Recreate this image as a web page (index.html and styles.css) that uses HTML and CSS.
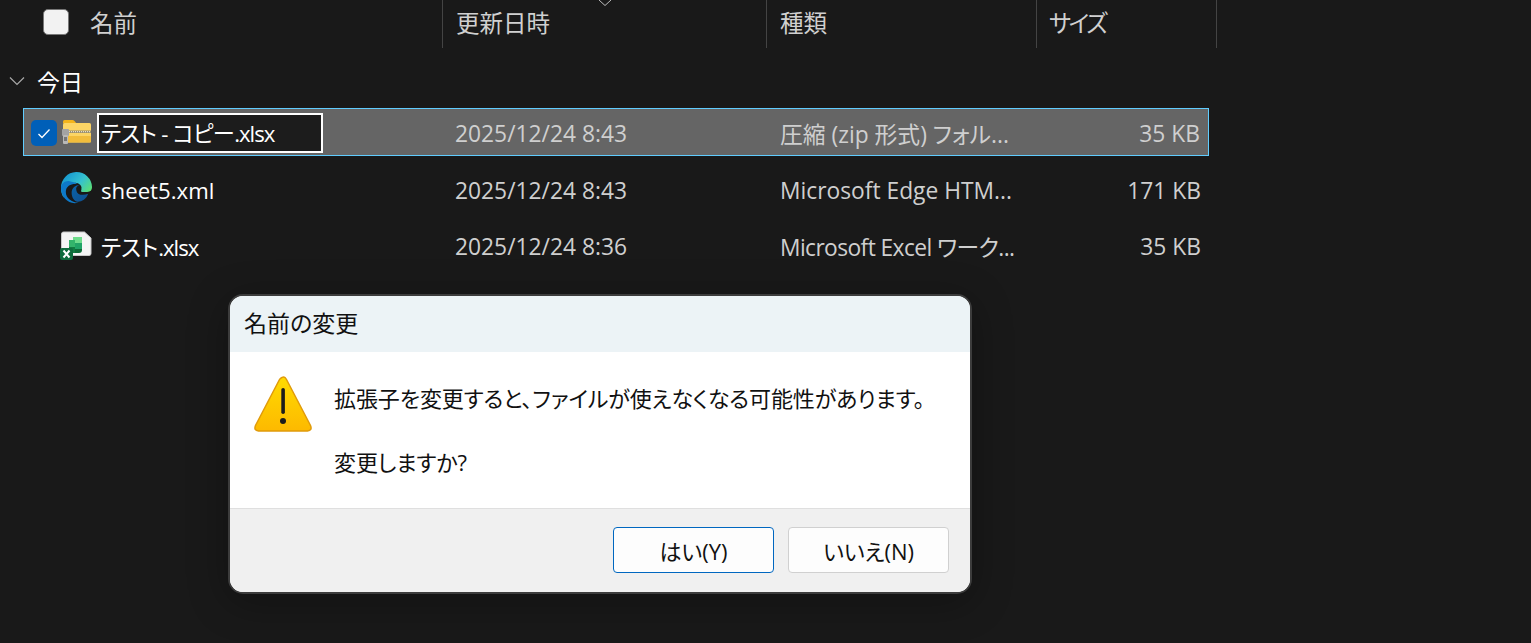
FILE: index.html
```html
<!DOCTYPE html>
<html lang="ja">
<head>
    <meta charset="utf-8">
    <title>名前の変更</title>
    <link rel="stylesheet" href="styles.css">
</head>
<body>
    <main class="explorer">
        <div class="list-header">
            <div class="col col-name">
                <span class="header-check"></span>
                <span>名前</span>
            </div>
            <div class="col col-date">更新日時
                <svg class="sort-arrow" width="14" height="7" viewBox="0 0 14 7"><path d="M1 0l6 5.500 6-5.500" fill="none" stroke="#bdbdbd" stroke-width="1"/></svg>
            </div>
            <div class="col col-type">種類</div>
            <div class="col col-size">サイズ</div>
        </div>

        <div class="group-title">
            <svg width="18" height="10" viewBox="0 0 18 10"><path d="M2 1.500l7 7 7-7" fill="none" stroke="#a8a8a8" stroke-width="1.200"/></svg>
            <span>今日</span>
        </div>

        <div class="file-row selected">
            <div class="cell-name">
                <span class="row-check">
                    <svg width="14" height="11" viewBox="0 0 14 11"><path d="M1.500 6l3.500 3.500 7.500-8" fill="none" stroke="#fff" stroke-width="1.300"/></svg>
                </span>
                <svg class="file-icon" width="31" height="30" viewBox="0 0 31 30">
                    <path d="M2 3.500q0-1.500 1.500-1.500h8q1 0 2 1l2 2.500h-13.500z" fill="#f3b41b"/>
                    <path d="M2 6.500q0-1.500 1.500-1.500h25q1.500 0 1.500 1.500v16.500q0 1.500-1.500 1.500h-25q-1.500 0-1.500-1.500z" fill="#fcd565"/>
                    <rect x="2" y="18" width="28" height="6.500" rx="1" fill="#f2bd3c"/>
                    <rect x="7" y="12.500" width="23" height="2.500" fill="#9c9170"/>
                    <path d="M8 13.700h22" stroke="#f5f0de" stroke-width="1" stroke-dasharray="1 1"/>
                    <rect x="1" y="11" width="7" height="7" rx="1" fill="#a3a3a3"/>
                    <rect x="2" y="17" width="5" height="9" rx="1" fill="#b8b8b8"/>
                    <rect x="3" y="19" width="3" height="4" fill="#777"/>
                </svg>
                <span class="rename-box">テスト - コピー<span class="ext">.xlsx</span></span>
            </div>
            <div class="cell-date">2025/12/24 8:43</div>
            <div class="cell-type">圧縮 (zip 形式) フォル...</div>
            <div class="cell-size">35 KB</div>
        </div>

        <div class="file-row">
            <div class="cell-name">
                <svg class="file-icon edge-icon" width="33" height="34" viewBox="0 0 34 34">
                    <defs>
                        <linearGradient id="edge-top" x1="0" y1="0" x2="1" y2="0.700">
                            <stop offset="0" stop-color="#0c8bd0"/>
                            <stop offset="0.600" stop-color="#35c1d0"/>
                            <stop offset="1" stop-color="#5ee26f"/>
                        </linearGradient>
                        <linearGradient id="edge-low" x1="0" y1="0" x2="1" y2="1">
                            <stop offset="0" stop-color="#0a62a8"/>
                            <stop offset="1" stop-color="#0f4f8e"/>
                        </linearGradient>
                    </defs>
                    <path d="M1 17a16 16 0 0 1 32-1q0 5-5 5h-5q-2 0-1-2 1-3-1-5-4-4-10-1-6 2-7 8-1 3 0 6-3-4-3-10z" fill="url(#edge-top)"/>
                    <path d="M1 17c0-5 5-8 9-7 5 1 8 3 8 3-5-1-12 1-12 8 0 6 6 11 13 11-9 3-18-5-18-15z" fill="#0d79c9"/>
                    <path d="M12 22c0-5 4-8 8-8-3 1-4 3-3 6 1 4 6 5 12 3-2 6-8 9-12 8-3-1-5-5-5-9z" fill="url(#edge-low)"/>
                </svg>
                <span class="file-name">sheet5.xml</span>
            </div>
            <div class="cell-date">2025/12/24 8:43</div>
            <div class="cell-type">Microsoft Edge HTM...</div>
            <div class="cell-size">171 KB</div>
        </div>

        <div class="file-row">
            <div class="cell-name">
                <svg class="file-icon" width="33" height="30" viewBox="0 0 33 30">
                    <path d="M1.500 3q0-2 2-2h21l6.500 6v15.500q0 2-2 2h-25.500q-2 0-2-2z" fill="#f5f5f5" stroke="#c8c8c8"/>
                    <path d="M13 6h9v6h-9z" fill="#6fdc8c"/>
                    <path d="M9 9h6v7h-6z" fill="#33b46b"/>
                    <path d="M15 12h7v6h-7z" fill="#21a366"/>
                    <path d="M9 16h6v6h-6z" fill="#107c41"/>
                    <path d="M15 18h7v1q0 3-3 3h-4z" fill="#0e6b38"/>
                    <rect x="0" y="17" width="13" height="12" rx="2" fill="#0e6b3c"/>
                    <path d="M3.500 19.500l6 7M9.500 19.500l-6 7" stroke="#fff" stroke-width="2"/>
                </svg>
                <span class="file-name">テスト<span class="ext">.xlsx</span></span>
            </div>
            <div class="cell-date">2025/12/24 8:36</div>
            <div class="cell-type tight">Microsoft Excel ワーク...</div>
            <div class="cell-size">35 KB</div>
        </div>
    </main>

    <!-- Rename warning -->
    <div class="dialog">
        <div class="dialog-title">名前の変更</div>
        <div class="dialog-body">
            <svg class="warn-icon" width="60" height="60" viewBox="0 0 60 60">
                <defs>
                    <linearGradient id="warn-fill" x1="0" y1="0" x2="0" y2="1">
                        <stop offset="0" stop-color="#ffdb00"/>
                        <stop offset="1" stop-color="#fdb900"/>
                    </linearGradient>
                </defs>
                <path d="M29 3.500q1.500-1.200 3 0 .7.600 1.500 2l24 46q2 5-3 5.500h-49q-5-.5-3-5.500l24-46q.8-1.400 2.500-2z" fill="url(#warn-fill)" stroke="#e09b0b" stroke-width="1.500"/>
                <rect x="28.300" y="14" width="3.600" height="26" rx="1.800" fill="#1c1c1c"/>
                <circle cx="30" cy="47" r="3" fill="#1c1c1c"/>
            </svg>
            <div class="dialog-text">
                <p>拡張子を変更すると、ファイルが使えなくなる可能性があります。</p>
                <p>変更しますか?</p>
            </div>
        </div>
        <div class="dialog-footer">
            <button class="button default">はい(Y)</button>
            <button class="button">いいえ(N)</button>
        </div>
    </div>
</body>
</html>
```

FILE: styles.css
```css
* {
    box-sizing: border-box;
}

html,
body {
    height: 100%;
}

body {
    margin: 0;
    background-color: #191919;
    color: #fff;
    font-family: "Open Sans", "Noto Sans CJK JP", sans-serif;
    font-size: 22px;
    font-feature-settings: "palt";
    overflow: hidden;
}

.list-header {
    display: flex;
    width: 1217px;
    height: 48px;
    color: #d0d0d0;
    font-size: 23.5px;
}

.col {
    position: relative;
    display: flex;
    align-items: center;
    height: 48px;
    border-right: 1px solid #444;
    padding-left: 13px;
    padding-bottom: 4px;
}

.col-name {
    width: 443px;
    padding-left: 43px;
    gap: 21px;
}

.col-date {
    width: 324px;
}

.col-type {
    width: 270px;
}

.col-size {
    width: 180px;
    padding-left: 12px;
    letter-spacing: -2.5px;
}

.header-check {
    width: 26px;
    height: 26px;
    border-radius: 5px;
    background-color: #f2f2f2;
    border: 1px solid #777;
}

.sort-arrow {
    position: absolute;
    top: 0;
    left: 155px;
}

.group-title {
    display: flex;
    align-items: center;
    gap: 11px;
    height: 60px;
    padding-left: 8px;
    padding-top: 5px;
    font-size: 23px;
}

.file-row {
    display: flex;
    align-items: center;
    width: 1186px;
    height: 48px;
    margin-left: 23px;
    margin-bottom: 8px;
    color: #cfcfcf;
    font-size: 22.8px;
}

.file-row.selected {
    background-color: #656565;
    border: 1px solid #60cdff;
    padding-top: 2px;
    margin-bottom: 10px;
}

.cell-name {
    display: flex;
    align-items: center;
    width: 432px;
    padding-left: 37px;
    color: #fff;
    font-size: 22.2px;
}

.selected .cell-name {
    width: 431px;
    padding-left: 7px;
}

.row-check {
    display: flex;
    align-items: center;
    justify-content: center;
    flex: none;
    width: 26px;
    height: 26px;
    border-radius: 5px;
    background-color: #005fb8;
    margin-right: 4px;
}

.file-icon {
    flex: none;
    margin-right: 8px;
}

.selected .file-icon {
    margin-right: 5px;
}

.edge-icon {
    margin-bottom: 4px;
}

.rename-box {
    width: 226px;
    height: 40px;
    line-height: 38px;
    padding-left: 2px;
    background-color: #1c1c1c;
    border: 2px solid #fff;
    white-space: nowrap;
    letter-spacing: -0.7px;
}

.ext {
    letter-spacing: -1px;
}

.cell-date {
    width: 325px;
}

.cell-type {
    width: 338px;
    white-space: nowrap;
}

.cell-type.tight {
    letter-spacing: -0.6px;
}

.cell-size {
    flex: 1;
    text-align: right;
    padding-right: 8px;
    margin-left: -100px;
}

/* Dialog */
.dialog {
    position: absolute;
    top: 294px;
    left: 228px;
    display: flex;
    flex-direction: column;
    width: 744px;
    height: 300px;
    border: 2px solid #3c3c3c;
    border-radius: 15px;
    background-color: #fff;
    color: #111;
    overflow: hidden;
    box-shadow: 0 8px 40px rgba(0, 0, 0, 0.3);
}

.dialog-title {
    height: 56px;
    padding-left: 14px;
    line-height: 54px;
    background-color: #ecf3f6;
    font-size: 23px;
}

.dialog-body {
    display: flex;
    flex: 1;
    padding: 22px 0 0 23px;
}

.warn-icon {
    flex: none;
    margin-right: 21px;
}

.dialog-text {
    padding-top: 8px;
    letter-spacing: -0.1px;
}

.dialog-text p {
    margin: 0 0 32px 0;
    line-height: 32px;
    white-space: nowrap;
}

.dialog-text p:last-child {
    margin-bottom: 0;
}

.dialog-footer {
    display: flex;
    justify-content: flex-end;
    gap: 14px;
    height: 84px;
    padding: 18px 21px 0 0;
    background-color: #f0f0f0;
    border-top: 1px solid #dfdfdf;
}

.button {
    width: 161px;
    height: 46px;
    border: 1px solid #d0d0d0;
    border-radius: 4px;
    background-color: #fdfdfd;
    color: #111;
    font-family: inherit;
    font-size: 22px;
    font-feature-settings: "palt";
}

.button.default {
    border-color: #0067c0;
}
```
